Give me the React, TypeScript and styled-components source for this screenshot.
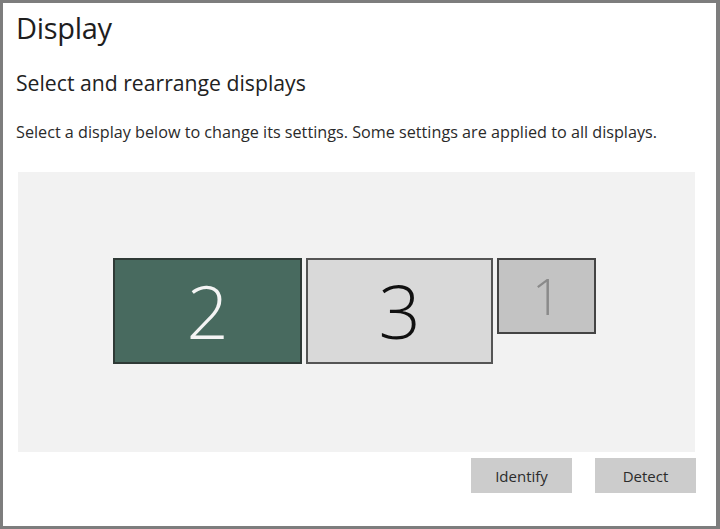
import React from "react";
import styled, { createGlobalStyle } from "styled-components";

const Global = createGlobalStyle`
  html, body { margin: 0; padding: 0; background: #ffffff; }
  * { box-sizing: border-box; }
`;

const Frame = styled.div`
  width: 720px;
  height: 529px;
  border-style: solid;
  border-color: #7d7d7d;
  border-width: 3px 4px 3px 3px;
  background: #ffffff;
  padding: 0 0 0 13px;
  font-family: "Open Sans", "Noto Sans", sans-serif;
  color: #222;
  display: flex;
  flex-direction: column;
`;

const Title = styled.h1`
  margin: 5px 0 0 0;
  font-size: 29px;
  font-weight: 400;
  line-height: 40px;
  color: #1e1e1e;
  letter-spacing: -0.3px;
`;

const Subtitle = styled.h2`
  margin: 21px 0 0 0;
  font-size: 21.2px;
  font-weight: 400;
  line-height: 28px;
  color: #222;
`;

const Description = styled.p`
  margin: 24px 0 0 0;
  font-size: 16.2px;
  line-height: 22px;
  color: #2a2a2a;
`;

const Arrange = styled.div`
  margin: 29px 0 0 2px;
  width: 677px;
  height: 280px;
  background: #f2f2f2;
  padding: 86px 0 0 95px;
  display: flex;
  align-items: flex-start;
  gap: 4px;
`;

const Monitor = styled.div<{ $w: number; $h: number; $bg: string; $fg: string; $size: number; $border: string }>`
  width: ${(p) => p.$w}px;
  height: ${(p) => p.$h}px;
  background: ${(p) => p.$bg};
  border: 2px solid ${(p) => p.$border};
  color: ${(p) => p.$fg};
  font-size: ${(p) => p.$size}px;
  font-weight: 300;
  display: flex;
  align-items: center;
  justify-content: center;
  line-height: 1;
`;

const Buttons = styled.div`
  margin: 6px 0 0 0;
  width: 680px;
  display: flex;
  justify-content: flex-end;
  gap: 23px;
`;

const Button = styled.button`
  width: 101px;
  height: 35px;
  border: none;
  background: #cccccc;
  font-family: "Open Sans", "Noto Sans", sans-serif;
  font-size: 15px;
  color: #2b2b2b;
  padding: 0;
`;

export default function App() {
  return (
    <>
      <Global />
      <Frame>
        <Title>Display</Title>
        <Subtitle>Select and rearrange displays</Subtitle>
        <Description>
          Select a display below to change its settings. Some settings are applied to all displays.
        </Description>
        <Arrange>
          <Monitor $w={189} $h={106} $bg="#486a5f" $fg="#f4f4f4" $size={74} $border="#2f3a36">2</Monitor>
          <Monitor $w={187} $h={106} $bg="#d9d9d9" $fg="#111111" $size={74} $border="#555555">3</Monitor>
          <Monitor $w={99} $h={76} $bg="#c3c3c3" $fg="#8a8a8a" $size={50} $border="#444444">1</Monitor>
        </Arrange>
        <Buttons>
          <Button>Identify</Button>
          <Button>Detect</Button>
        </Buttons>
      </Frame>
    </>
  );
}
